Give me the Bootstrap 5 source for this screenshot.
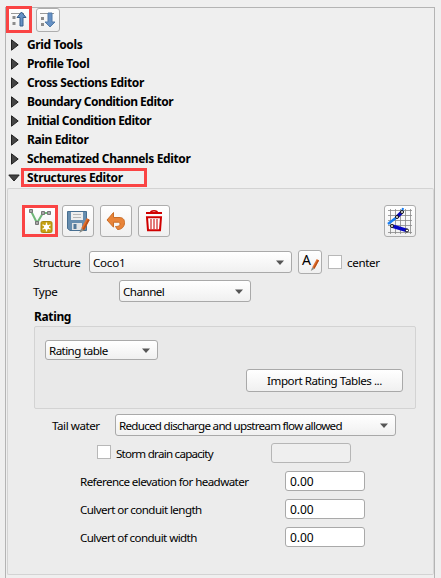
<!DOCTYPE html>
<html lang="en">
<head>
<meta charset="utf-8">
<meta name="viewport" content="width=device-width, initial-scale=1">
<title>Structures Editor</title>
<link href="https://cdn.jsdelivr.net/npm/bootstrap@5.3.0/dist/css/bootstrap.min.css" rel="stylesheet">
<style>
body{background:#efefef;color:#000;font:11.6px/19px "Noto Sans","DejaVu Sans Condensed",sans-serif;letter-spacing:-.58px;height:578px;overflow:hidden;white-space:nowrap}
.dock{margin:7px 6px 0 5px;height:571px;border:1px solid #b4b4b4;border-bottom:0}
.dock-tools{height:27px;padding-left:30px}
.tool{display:flex;align-items:center;justify-content:center;flex:none;padding:0;width:32px;height:32px;border:1px solid #adadad;border-radius:3px;background:linear-gradient(#fff,#f0f0f0)}
.tool svg{overflow:visible}
.tool-s{width:24px;height:24px}
.marked{border:3px solid #fa4444;border-radius:0}
.first-tool{width:26px;height:27px;margin:-2px 4px 0 -30px}
.tree{margin:0;font-size:12px;font-weight:700;letter-spacing:-.37px}
.tree li{height:19px;display:flex;align-items:center;padding-left:5px}
.tree svg{flex:none;width:8px;height:12px;margin-right:8px}
.tree .tight{letter-spacing:-.5px}
.tree .open{padding-left:2px}
.tree .open svg{width:12px;height:8px;margin-right:1px}
.tree .open span{width:126px;height:19px;line-height:14px;padding-left:3px;letter-spacing:-.34px}
.panel{margin:1px 0 0 1px;height:387px;border:1px solid #d3d3d3;border-right-color:#d8d8d8;background:#ececec;border-radius:2px}
.combo{display:flex;align-items:center;justify-content:space-between;flex:none;border:1px solid #a9a9a9;border-radius:3px;background:linear-gradient(#fff,#f0f0f0);height:22px;padding:0 7px 0 3px;color:#000}
.combo svg{width:8px;height:5px}
.natural{letter-spacing:-.25px}
.field{flex:none;width:80px;height:20px;border:1px solid #a9a9a9;border-radius:3px;background:#fff;padding:0 4px;font:inherit;font-size:12px;letter-spacing:-.1px;color:#000}
.field:disabled{background:#efefef;border-color:#b6b6b6}
.chk{appearance:none;flex:none;width:14px;height:14px;border:1px solid #b8b8b8;background:#fff;margin:0 5px 0 0}
.line{display:flex;align-items:center}
.tools-row{height:32px;margin:16px 17px 0 14px}
.structure{height:24px;margin:13px 0 0 25px}
.structure label,.type label{flex:none;letter-spacing:-.35px}
.type{height:22px;margin:6px 0 0 25px}
.rating-title{height:18px;line-height:18px;margin:6px 0 0 26px;font-size:12px;font-weight:700;letter-spacing:-.37px}
.rating{width:382px;height:83px;margin-left:26px;border:1px solid #d3d3d3;border-radius:2px;background:#e9e9e9;padding:13px 12px 0 10px}
.import-btn{width:157px;height:23px;border:1px solid #a9a9a9;border-radius:3px;background:linear-gradient(#fff,#f0f0f0);padding:0;font:inherit;letter-spacing:-.45px}
.tail{height:22px;margin:5px 0 0 44px}
.tail label{letter-spacing:-.45px}
.tail .combo{letter-spacing:-.72px}
.storm{height:20px;margin:7px 0 0 89px}
.storm label{letter-spacing:-.75px}
.storm .chk{margin-bottom:2px}
.num{height:20px;margin:8px 0 0 72px}
.num label{width:205px;flex:none}
</style>
<script src="https://cdn.jsdelivr.net/npm/bootstrap@5.3.0/dist/js/bootstrap.bundle.min.js"></script>
</head>
<body>
<svg width="0" height="0" class="d-none">
<symbol id="pencil" viewBox="0 0 12 16"><path d="M9 0l3 2-6 11-3-2z" fill="#e2702e"/><path d="M10.500 1l1.500 1-6 11-1.500-1z" fill="#b84f18"/><path d="M3 11l3 2-5 3z" fill="#8c8c85"/></symbol>
<symbol id="arr" viewBox="0 0 8 5"><path d="M0 .5h8L4 5z" fill="#555"/></symbol>
<symbol id="right" viewBox="0 0 8 12"><path d="M.5.8L7.200 6 .5 11.200z" fill="#444" stroke="#222"/></symbol>
</svg>
<main class="dock">
<div class="dock-tools d-flex">
<button class="tool marked first-tool" aria-label="Collapse"><svg width="18" height="18" viewBox="0 0 18 18"><path d="M1 2.500h13" stroke="#999"/><path d="M2.500 5h3v3h-3zM2.500 11h3v3h-3z" fill="#8c8c8c"/><path d="M11.500 1l4.500 5.500h-3V15h-3V6.500H7z" fill="#6691c5" stroke="#375e8c"/></svg></button>
<button class="tool tool-s" aria-label="Expand"><svg width="18" height="18" viewBox="0 0 18 18"><path d="M1 2.500h14" stroke="#999"/><path d="M2 6h3v3H2zM2 12h3v3H2z" fill="#8c8c8c"/><path d="M11 16l5-5h-3V2H9v9H6z" fill="#6691c5" stroke="#527ba8"/></svg></button>
</div>
<ul class="tree list-unstyled">
<li><svg><use href="#right"/></svg><span>Grid Tools</span></li>
<li><svg><use href="#right"/></svg><span>Profile Tool</span></li>
<li><svg><use href="#right"/></svg><span>Cross Sections Editor</span></li>
<li><svg><use href="#right"/></svg><span class="tight">Boundary Condition Editor</span></li>
<li><svg><use href="#right"/></svg><span class="tight">Initial Condition Editor</span></li>
<li><svg><use href="#right"/></svg><span>Rain Editor</span></li>
<li><svg><use href="#right"/></svg><span>Schematized Channels Editor</span></li>
<li class="open"><svg viewBox="0 0 12 8"><path d="M.8 1h10.400L6 7z" fill="#444" stroke="#222"/></svg><span class="marked">Structures Editor</span></li>
</ul>
<section class="panel">
<div class="line tools-row">
<button class="tool marked me-1" style="width:36px" aria-label="Add structure"><svg width="26" height="26" viewBox="0 0 26 26"><path d="M4 3l6 12 6-10h7" fill="none" stroke="#6fb878" stroke-width="2"/><g fill="#aaa" stroke="#777"><path d="M2.500 1.500h3v3h-3zM8.500 13.500h3v3h-3zM14.500 3.500h3v3h-3zM20.500 3.500h3v3h-3z"/></g><rect x="14" y="13.500" width="11" height="11" rx="1.500" fill="#c6a111" stroke="#a98a0c"/><path d="M19.500 14.500v9M15.500 16.700l8 4.600M23.500 16.700l-8 4.600" stroke="#fff" stroke-width="1.300"/><circle cx="19.500" cy="19" r="2.600" fill="#fff"/></svg></button>
<button class="tool" aria-label="Save"><svg width="26" height="26" viewBox="0 0 26 26"><path d="M2.500 3.500h19v19H5l-2.500-2z" fill="#668daf" stroke="#486f91"/><path d="M6 4h12v8H6z" fill="#eee"/><path d="M8 6.500h8M8 9.500h8" stroke="#b6b6b6"/><path d="M7 15h10v7H7z" fill="#e0e3e5"/><path d="M8.500 16h3v5h-3z" fill="#527899"/><use href="#pencil" x="13" y="10" width="12" height="15"/></svg></button>
<button class="tool" style="margin-left:6px" aria-label="Revert"><svg width="24" height="24" viewBox="0 0 24 24"><path d="M3 11L9.500 3.500v5h5.500c4 0 5.500 2 5.500 5 0 4-2.500 7-7 7l-2-3c3.500 0 4.500-1 4.500-2.500 0-1.300-.8-1.800-2-1.800H9.500v5z" fill="#e88439" stroke="#ca6c25"/></svg></button>
<button class="tool" style="margin-left:6px" aria-label="Delete"><svg width="20" height="24" viewBox="0 0 20 24"><path d="M6.500 4c0-3 7-3 7 0" fill="none" stroke="#c00" stroke-width="1.500"/><path d="M2 4h16" stroke="#d00000" stroke-width="2"/><path d="M3 8.200h14l-1 13H4z" fill="#fff" stroke="#d00000" stroke-width="2"/><path d="M7 10v10M10 10v10M13 10v10" stroke="#dc5b5b" stroke-width="1.600"/></svg></button>
<button class="tool ms-auto" aria-label="Schematize"><svg width="26" height="26" viewBox="0 0 26 26"><path d="M1 2.500h24M1 7.500h24M1 12.500h24M1 17.500h24M1 24.500h24M3.500 1v25M8.500 1v25M13.500 1v25M18.500 1v25M23.500 1v25" stroke="#888" stroke-width=".8"/><path d="M1 16l9-7" stroke="#197df0" stroke-width="2.400"/><path d="M10 9l5-5" stroke="#0707b8" stroke-width="3.500"/><path d="M15 4l1-4" stroke="#197df0" stroke-width="2"/><path d="M5 18l15 4.500" stroke="#0707c4" stroke-width="3.500"/><g fill="#fff" stroke="#111"><circle cx="10" cy="9" r="1.500"/><circle cx="15" cy="4" r="1.500"/><circle cx="5" cy="18" r="1.500"/><circle cx="20" cy="22.500" r="1.500"/></g></svg></button>
</div>
<div class="line structure"><label style="width:56px">Structure</label><div class="combo natural" style="width:203px">Coco1<svg><use href="#arr"/></svg></div>
<button class="tool tool-s" style="margin:0 6px" aria-label="Rename"><svg width="22" height="22" viewBox="0 0 22 22"><text x="3" y="13.500" font-family="Noto Sans" font-size="14">A</text><use href="#pencil" x="11" y="8" width="9" height="12"/></svg></button><input type="checkbox" class="chk"><label>center</label></div>
<div class="line type"><label style="width:86px">Type</label><div class="combo" style="width:132px;letter-spacing:-.5px">Channel<svg><use href="#arr"/></svg></div></div>
<div class="rating-title">Rating</div>
<div class="rating"><div class="combo" style="width:113px;height:20px">Rating table<svg><use href="#arr"/></svg></div><div class="d-flex justify-content-end" style="margin-top:9px"><button class="import-btn">Import Rating Tables ...</button></div></div>
<div class="line tail"><label style="width:63px">Tail water</label><div class="combo" style="width:281px">Reduced discharge and upstream flow allowed<svg><use href="#arr"/></svg></div></div>
<div class="line storm"><input type="checkbox" class="chk"><label style="width:155px">Storm drain capacity</label><input class="field" disabled></div>
<div class="line num"><label>Reference elevation for headwater</label><input class="field" value="0.00"></div>
<div class="line num"><label>Culvert or conduit length</label><input class="field" value="0.00"></div>
<div class="line num"><label>Culvert of conduit width</label><input class="field" value="0.00"></div>
</section>
</main>
</body>
</html>
